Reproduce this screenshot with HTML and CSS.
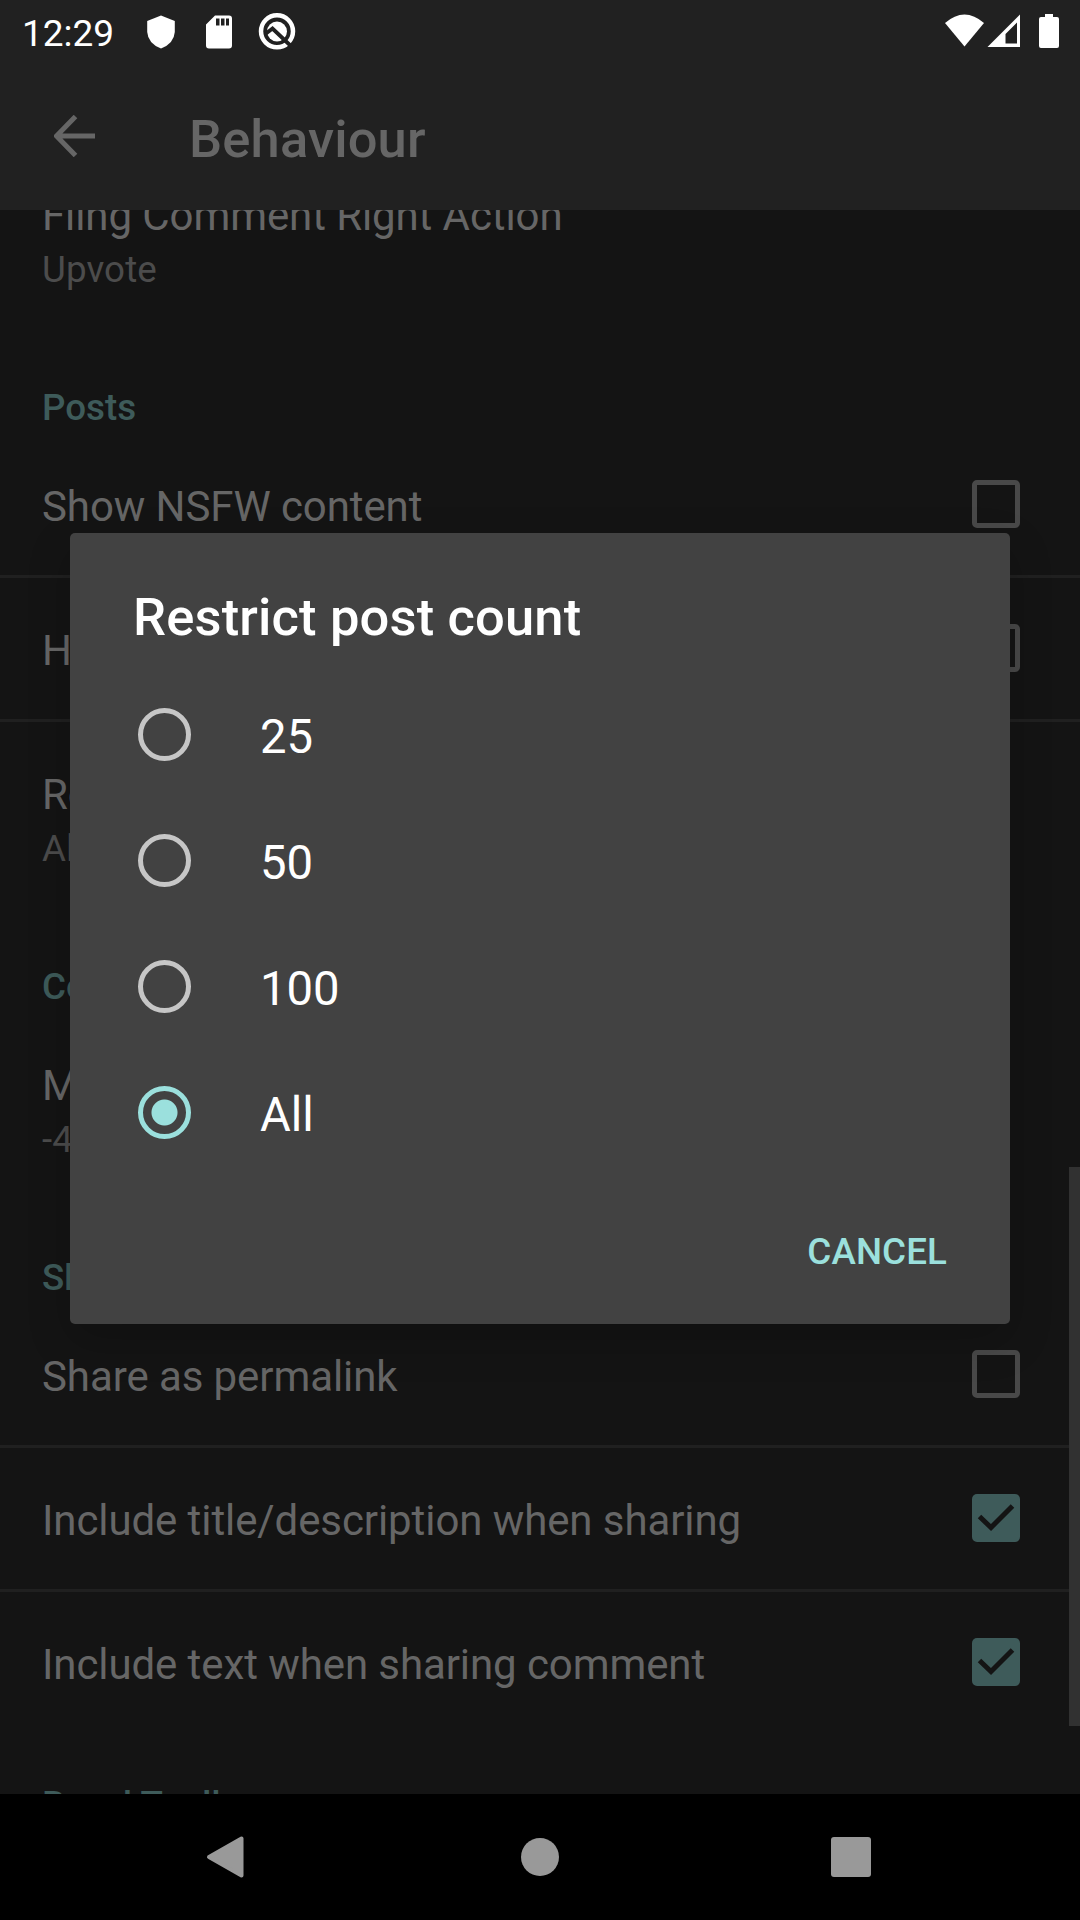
FILE: index.html
```html
<!DOCTYPE html>
<html lang="en">
<head>
<meta charset="utf-8">
<title>Behaviour</title>
<link rel="stylesheet" href="styles.css">
</head>
<body>
<div class="screen">
  <header class="status">
    <span class="clock">12:29</span>
    <svg class="status-left" width="160" height="63" viewBox="0 0 160 63">
      <path class="lit" d="M16 15.500 29.800 21V32Q29 43.500 16 48.500Q3 43.500 2.200 32V21Z"/>
      <path class="lit" fill-rule="evenodd" d="M70 15.500H84Q87 15.500 87 18.500V45.500Q87 48.500 84 48.500H64Q61 48.500 61 45.500V24.500ZM71 18.500V25.500H74.500V18.500ZM76 18.500V25.500H79.500V18.500ZM81 18.500V25.500H84V18.500Z"/>
      <circle cx="132" cy="31.300" r="16" fill="none" stroke="#fff" stroke-width="4.500"/>
      <circle class="lit" cx="132" cy="31.500" r="10"/>
      <path d="M121 33.500 127.500 28.500 148 48" fill="none" stroke="#212121" stroke-width="3.800"/>
    </svg>
    <svg class="status-right" width="120" height="63" viewBox="0 0 120 63">
      <path class="lit" d="M5 23Q24.500 6 44 23L24.500 46.500Z"/>
      <path class="lit" fill-rule="evenodd" d="M80 14.500V47H47.500ZM77 22.500 65.500 34V43.500H77Z"/>
      <path class="lit" d="M105 14H113V17H117Q119 17 119 19V46Q119 48 117 48H101Q99 48 99 46V19Q99 17 101 17H105Z"/>
    </svg>
  </header>
  <div class="appbar">
    <svg class="back" width="42" height="42" viewBox="0 0 42 42"><path d="M41 21H3M21.500 1.500 2.500 21 21.500 40.500" fill="none" stroke="#666" stroke-width="5"/></svg>
    <h1>Behaviour</h1>
  </div>
  <main class="prefs">
    <div class="row two first"><span>Fling Comment Right Action</span><small>Upvote</small></div>
    <h2>Posts</h2>
    <div class="row line"><span>Show NSFW content</span><i class="box"></i></div>
    <div class="row line"><span>Hide read posts</span><i class="box"></i></div>
    <div class="row two"><span>Restrict post count</span><small>All</small></div>
    <h2>Comments</h2>
    <div class="row two"><span>Minimum comment score</span><small>-4</small></div>
    <h2>Sharing</h2>
    <div class="row line"><span>Share as permalink</span><i class="box"></i></div>
    <div class="row line"><span>Include title/description when sharing</span><i class="box on"><svg width="48" height="48" viewBox="0 0 48 48"><path d="M7.500 22.500 19 33.500 40.500 12" fill="none" stroke="#141414" stroke-width="5"/></svg></i></div>
    <div class="row"><span>Include text when sharing comment</span><i class="box on"><svg width="48" height="48" viewBox="0 0 48 48"><path d="M7.500 22.500 19 33.500 40.500 12" fill="none" stroke="#141414" stroke-width="5"/></svg></i></div>
    <h2 class="last">Bezel Toolbar</h2>
  </main>
  <nav class="nav">
    <svg width="1080" height="126" viewBox="0 0 1080 126">
      <path d="M209 63 241.500 44.500V81.500Z" fill="#999" stroke="#999" stroke-width="4" stroke-linejoin="round"/>
      <circle cx="540" cy="63" r="19" fill="#999"/>
      <rect x="831" y="43" width="40" height="40" rx="3" fill="#999"/>
    </svg>
  </nav>
  <div class="scrollbar"></div>
  <section class="dialog">
    <h3>Restrict post count</h3>
    <label class="option"><i class="radio"></i><span>25</span></label>
    <label class="option"><i class="radio"></i><span>50</span></label>
    <label class="option"><i class="radio"></i><span>100</span></label>
    <label class="option"><i class="radio picked"></i><span>All</span></label>
    <button class="cancel">CANCEL</button>
  </section>
</div>
</body>
</html>
```
FILE: styles.css
```css
* { box-sizing: border-box; margin: 0; padding: 0; }
body { font-family: Roboto, sans-serif; background: #141414; }
.screen { position: relative; width: 1080px; height: 1920px; display: flex; flex-direction: column; overflow: hidden; background: #141414; }
.status { height: 63px; flex: none; display: flex; background: #212121; color: #fff; padding: 0 20px 0 22px; }
.clock { width: 123px; font-size: 37px; line-height: 67px; }
.status-right { margin-left: auto; }
.lit { fill: #fff; }
.appbar { height: 147px; flex: none; display: flex; align-items: center; gap: 93px; padding: 0 54px; background: #212121; color: #666; }
.back { display: block; margin-top: -1px; }
h1, h3 { font-size: 52.5px; font-weight: 500; line-height: 62px; letter-spacing: 0.15px; }
h1 { padding-top: 4px; }
.prefs { height: 1584px; flex: none; overflow: hidden; color: #666; }
.row { height: 141px; display: flex; align-items: center; justify-content: space-between; padding: 0 60px 0 42px; font-size: 42px; line-height: 50px; }
.row > span { padding-top: 4px; white-space: nowrap; letter-spacing: -0.09px; }
.line { height: 144px; border-bottom: 3px solid #202020; }
.two { height: 187px; flex-direction: column; align-items: flex-start; justify-content: flex-start; padding-top: 48px; }
.two > span { padding-top: 0; }
.row small { font-size: 36.75px; line-height: 43px; margin-top: 7px; letter-spacing: 0.1px; color: #4c4c4c; }
.first { margin-top: -67px; }
.prefs h2 { height: 104px; padding: 56px 42px 0; color: #3e5b5a; font-size: 36.75px; line-height: 43px; font-weight: 500; }
.prefs .last { padding-top: 50px; }
.box { width: 48px; height: 48px; margin-top: -1px; border: 5px solid #494949; border-radius: 5px; }
.on { border: 0; background: #3e5b5a; }
.on svg { display: block; }
.nav { height: 126px; flex: none; background: #000; }
.scrollbar { position: absolute; right: 0; top: 1167px; width: 11px; height: 559px; background: #313131; }
.dialog { position: absolute; left: 70px; top: 533px; width: 940px; height: 791px; background: #424242; border-radius: 5px; color: #fff; display: flex; flex-direction: column; padding: 53px 63px 0; box-shadow: 0 16px 44px rgba(0,0,0,.2); }
.dialog h3 { margin-bottom: 23px; }
.option { height: 126px; display: flex; align-items: center; gap: 69px; padding-left: 5px; font-size: 47.25px; line-height: 56px; }
.option span { padding-top: 6px; }
.radio { width: 53px; height: 53px; border: 5px solid #c6c6c6; border-radius: 50%; }
.picked { border-color: #9be0dd; background: radial-gradient(circle, #9be0dd 12.500px, transparent 13.500px); }
.cancel { align-self: flex-end; margin-top: 55px; border: 0; background: none; color: #9be0dd; font: 500 36.75px/43px Roboto, sans-serif; letter-spacing: 0.1px; }
```
